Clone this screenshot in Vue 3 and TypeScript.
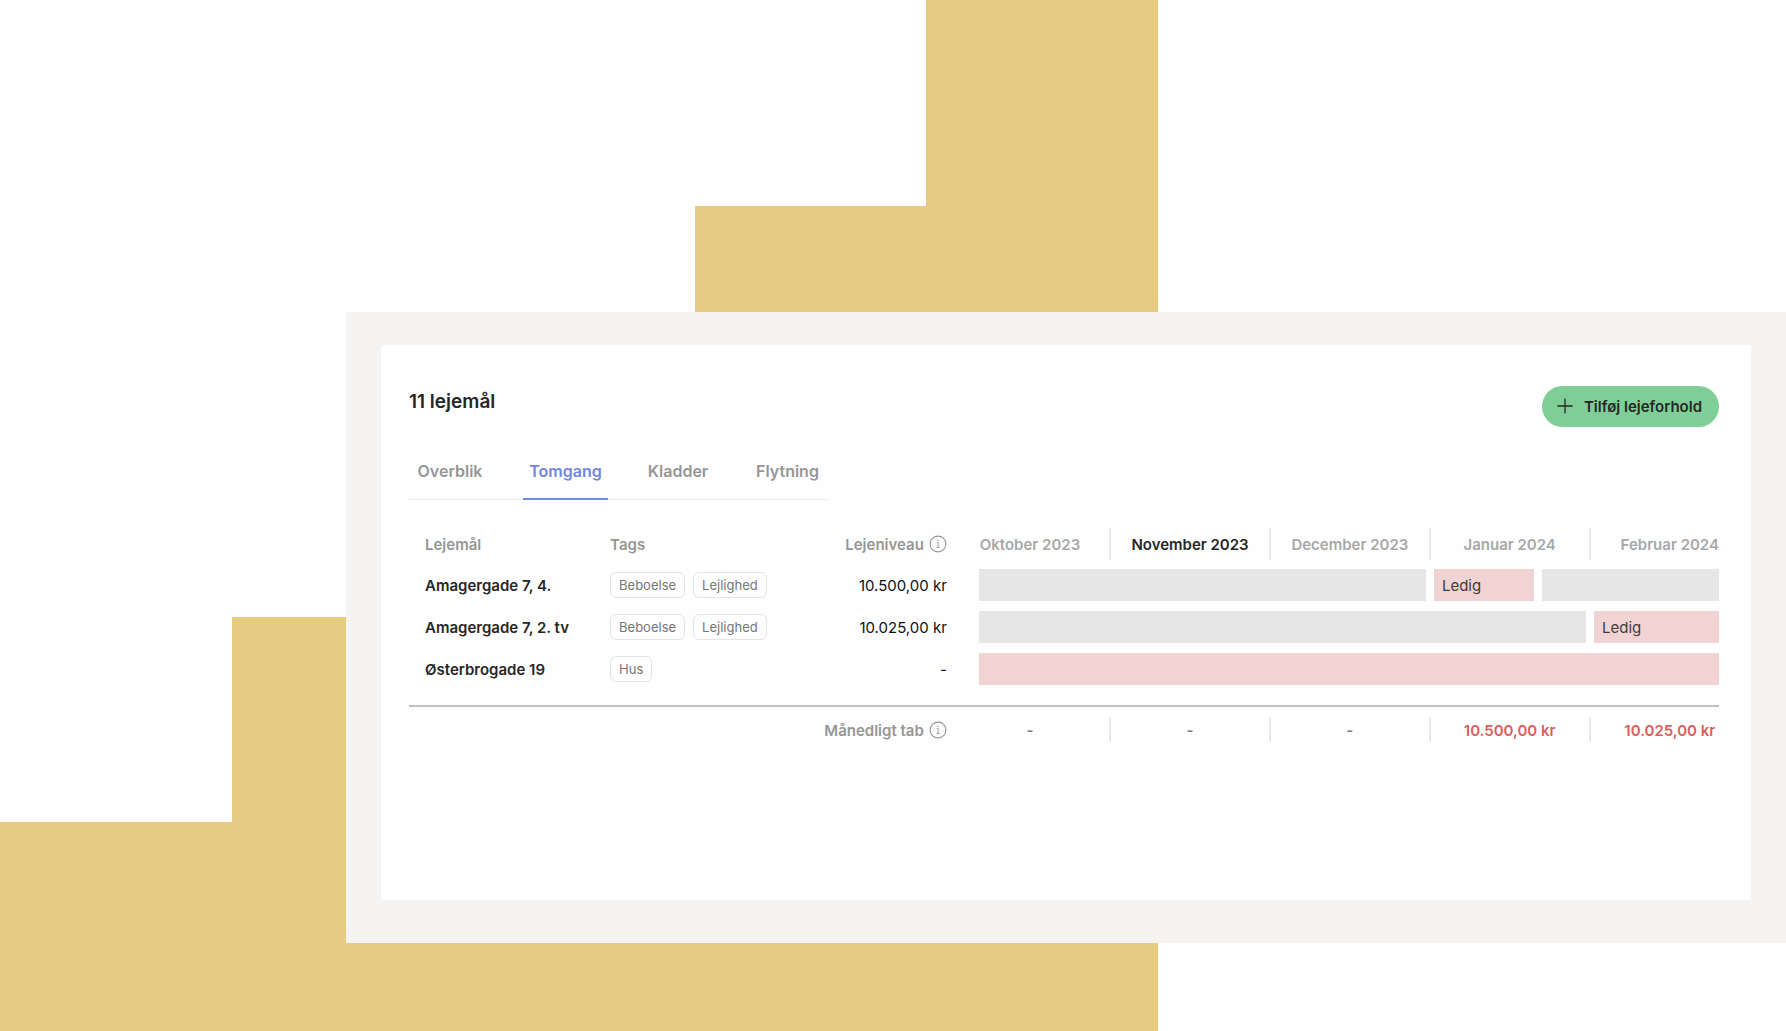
<script setup lang="ts">
import { ref } from 'vue'

interface Bar {
  vacant: boolean
  label: string
  share: number
}

interface Lease {
  name: string
  tags: string[]
  rent: string
  bars: Bar[]
}

interface Month {
  label: string
  loss: string
  current: boolean
}

const tabs = ['Overblik', 'Tomgang', 'Kladder', 'Flytning']
const activeTab = ref('Tomgang')

const months: Month[] = [
  { label: 'Oktober 2023', loss: '', current: false },
  { label: 'November 2023', loss: '', current: true },
  { label: 'December 2023', loss: '', current: false },
  { label: 'Januar 2024', loss: '10.500,00 kr', current: false },
  { label: 'Februar 2024', loss: '10.025,00 kr', current: false },
]

const leases: Lease[] = [
  {
    name: 'Amagergade 7, 4.',
    tags: ['Beboelse', 'Lejlighed'],
    rent: '10.500,00 kr',
    bars: [
      { vacant: false, label: '', share: 447 },
      { vacant: true, label: 'Ledig', share: 100 },
      { vacant: false, label: '', share: 177 },
    ],
  },
  {
    name: 'Amagergade 7, 2. tv',
    tags: ['Beboelse', 'Lejlighed'],
    rent: '10.025,00 kr',
    bars: [
      { vacant: false, label: '', share: 607 },
      { vacant: true, label: 'Ledig', share: 125 },
    ],
  },
  {
    name: 'Østerbrogade 19',
    tags: ['Hus'],
    rent: '-',
    bars: [{ vacant: true, label: '', share: 740 }],
  },
]

const stepHeight = (n: number): string => `${(n * 19.93 + 0.34).toFixed(2)}%`
</script>

<template>
  <main class="stage">
    <div class="stairs" aria-hidden="true">
      <span v-for="n in 5" :key="n" class="step" :style="{ height: stepHeight(n) }"></span>
    </div>

    <section class="panel">
      <div class="card">
        <header class="head">
          <h1 class="title">11 lejemål</h1>
          <button type="button" class="add">
            <svg class="plus" viewBox="0 0 16 16" aria-hidden="true">
              <path d="M8 .5v15M.5 8h15" />
            </svg>
            Tilføj lejeforhold
          </button>
        </header>

        <nav class="tabs">
          <button
            v-for="tab in tabs"
            :key="tab"
            type="button"
            class="tab"
            :class="{ active: tab === activeTab }"
            @click="activeTab = tab"
          >
            {{ tab }}
          </button>
        </nav>

        <table class="leases">
          <colgroup>
            <col class="col-name" />
            <col class="col-tags" />
            <col class="col-rent" />
            <col class="col-first" />
            <col class="col-month" />
            <col class="col-month" />
            <col class="col-month" />
            <col class="col-last" />
          </colgroup>
          <thead>
            <tr>
              <th scope="col" class="name">Lejemål</th>
              <th scope="col" class="text">Tags</th>
              <th scope="col" class="rent">
                <span class="with-info">
                  Lejeniveau
                  <svg class="info" viewBox="0 0 18 18" aria-hidden="true">
                    <circle cx="9" cy="9" r="7.9" />
                    <path class="stem" d="M7.8 7.6h1.4v4.8M7.6 12.5h3" />
                    <circle class="dot" cx="9" cy="5.3" r=".8" />
                  </svg>
                </span>
              </th>
              <th v-for="m in months" :key="m.label" scope="col" class="month">
                <span class="slot" :class="{ current: m.current }">{{ m.label }}</span>
              </th>
            </tr>
          </thead>
          <tbody>
            <tr v-for="lease in leases" :key="lease.name">
              <th scope="row" class="name">{{ lease.name }}</th>
              <td>
                <span class="tags">
                  <span v-for="tag in lease.tags" :key="tag" class="tag">{{ tag }}</span>
                </span>
              </td>
              <td class="rent">{{ lease.rent }}</td>
              <td colspan="5">
                <div class="bars">
                  <span
                    v-for="(bar, i) in lease.bars"
                    :key="i"
                    class="bar"
                    :class="{ vacant: bar.vacant }"
                    :style="{ flexGrow: bar.share }"
                    >{{ bar.label }}</span
                  >
                </div>
              </td>
            </tr>
          </tbody>
          <tfoot>
            <tr>
              <th scope="row" colspan="3" class="rent">
                <span class="with-info">
                  Månedligt tab
                  <svg class="info" viewBox="0 0 18 18" aria-hidden="true">
                    <circle cx="9" cy="9" r="7.9" />
                    <path class="stem" d="M7.8 7.6h1.4v4.8M7.6 12.5h3" />
                    <circle class="dot" cx="9" cy="5.3" r=".8" />
                  </svg>
                </span>
              </th>
              <td v-for="m in months" :key="m.label" class="month">
                <span class="slot" :class="{ loss: m.loss }">{{ m.loss || '-' }}</span>
              </td>
            </tr>
          </tfoot>
        </table>
      </div>
    </section>
  </main>
</template>

<style>
body {
  margin: 0;
  background: #fefefe;
}
</style>

<style scoped>
.stage {
  position: relative;
  box-sizing: border-box;
  min-height: 100vh;
  padding: 312px 0 88px 346px;
  overflow: hidden;
  font-family: Inter, 'Liberation Sans', sans-serif;
  font-size: 15px;
  line-height: 20px;
  color: #262626;
}

/* Staircase artwork behind the panel */
.stairs {
  position: absolute;
  inset: 0 auto 0 0;
  display: flex;
  align-items: flex-end;
  width: 64.84%;
}

.step {
  flex: 1;
  background: #e8cb83;
}

.panel {
  position: relative;
  padding: 33px 35px 43px;
  background: #f5f4f2;
}

.card {
  box-sizing: border-box;
  min-height: 555px;
  padding: 41px 32px 40px 28px;
  background: #fefefe;
}

.head {
  display: flex;
  align-items: flex-start;
  justify-content: space-between;
}

.title {
  margin: 4px 0 0;
  font-size: 19px;
  line-height: 24px;
  font-weight: 600;
}

.add {
  display: flex;
  align-items: center;
  gap: 11px;
  height: 41px;
  padding: 1px 17px 0 15px;
  border: 0;
  border-radius: 21px;
  background: #7fce97;
  color: #262626;
  font: inherit;
  font-weight: 600;
  cursor: pointer;
}

.plus {
  width: 16px;
  height: 16px;
  margin-bottom: 2px;
  fill: none;
  stroke: #262626;
  stroke-width: 1.3;
}

.tabs {
  display: grid;
  grid-template-columns: 82px 85px 76px 79px;
  gap: 32px;
  width: max-content;
  margin-top: 18px;
  border-bottom: 1px solid #e9e9e9;
}

.tab {
  height: 55px;
  margin-bottom: -1px;
  padding: 0 0 2px;
  border: 0;
  border-bottom: 2px solid transparent;
  background: none;
  color: #969696;
  font: inherit;
  font-size: 16px;
  font-weight: 600;
  cursor: pointer;
}

.tab.active {
  border-color: #7287e0;
  color: #7287e0;
}

.leases {
  width: 100%;
  margin-top: 24px;
  border-collapse: collapse;
  table-layout: fixed;
  white-space: nowrap;
}

.col-name { width: 15.35%; }
.col-tags { width: 13.75%; }
.col-rent { width: 14.4%; }
.col-first { width: 10.1%; }
.col-month { width: 12.2%; }

th,
td {
  box-sizing: border-box;
  height: 42px;
  padding: 0;
  text-align: left;
}

thead th {
  height: 40px;
  color: #969696;
  font-weight: 600;
}

.name,
.text,
.rent {
  padding-top: 2px;
}

.name {
  padding-left: 16px;
  font-weight: 600;
}

.rent {
  padding-right: 32px;
  text-align: right;
}

td.rent {
  color: #111;
  font-weight: 400;
}

.with-info {
  display: inline-flex;
  align-items: center;
  gap: 5px;
}

.info {
  width: 18px;
  height: 18px;
  margin-bottom: 3px;
  fill: none;
  stroke: #969696;
  stroke-width: 1.1;
}

.info .stem {
  stroke-width: 0.9;
}

.info .dot {
  fill: #969696;
  stroke: none;
}

.slot {
  box-sizing: border-box;
  display: flex;
  align-items: center;
  justify-content: center;
  height: 32px;
  padding-top: 2px;
  border-right: 2px solid #e6e6e6;
  color: #a8a8a8;
  font-weight: 600;
}

.month:nth-last-child(5) .slot {
  padding-right: 28px;
}

.month:last-child .slot {
  padding-left: 30px;
  border-right: 0;
}

.slot.current {
  color: #262626;
}

.tags {
  display: flex;
  gap: 8px;
}

.tag {
  padding: 2px 8px;
  border: 1px solid #e4e4e4;
  border-radius: 6px;
  color: #767676;
  font-size: 13px;
}

.bars {
  display: flex;
  gap: 8px;
}

.bar {
  flex-basis: 0;
  height: 32px;
  background: #e6e6e6;
  color: #3f3a3a;
  line-height: 34px;
  text-indent: 8px;
}

.bar.vacant {
  background: #f2d3d4;
}

tfoot::before {
  content: '';
  display: block;
  height: 15px;
}

tfoot th,
tfoot td {
  height: 47px;
  border-top: 2px solid #c0c0c0;
}

tfoot th {
  color: #969696;
  font-weight: 600;
}

tfoot .slot {
  height: 24px;
  color: #7d7d7d;
}

tfoot .slot.loss {
  color: #d9605c;
}
</style>
